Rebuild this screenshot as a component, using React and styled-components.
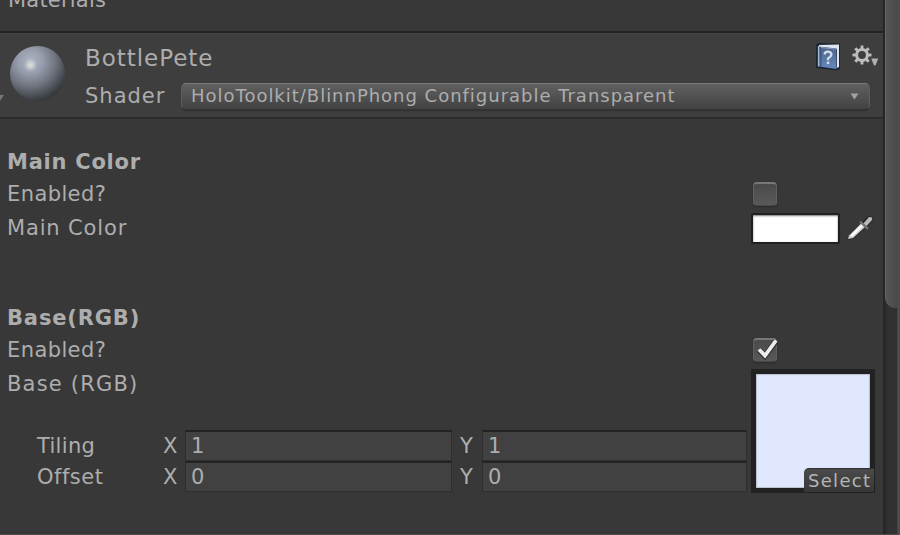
import React from 'react';
import styled, { createGlobalStyle } from 'styled-components';

const Global = createGlobalStyle`
  * { box-sizing: border-box; }
  body { margin: 0; background: #383838; font-family: "DejaVu Sans", sans-serif; color: #adadad; overflow: hidden; }
  svg { display: block; flex: none; }
`;

const Window = styled.div`
  display: flex;
  width: 900px;
  height: 535px;
  overflow: hidden;
  background: #383838;
  border-bottom: 1px solid #4b4b4b;
`;

const Panel = styled.main`
  width: 883px;
  flex: none;
`;

const Text = styled.span`
  display: block;
  white-space: pre;
  font-size: ${(p) => p.$size || 21}px;
  font-weight: ${(p) => (p.$bold ? 700 : 400)};
  letter-spacing: ${(p) => p.$track || 0}px;
  line-height: 30px;
  font-variant-ligatures: none;
`;

const Previous = styled.div`
  height: 33px;
  padding-left: 8px;
  overflow: hidden;
  border-bottom: 2px solid #232323;
  ${Text} { margin-top: -15px; }
`;

const Header = styled.header`
  height: 86px;
  display: flex;
  background: #3e3e3e;
  border-top: 1px solid #444;
  border-bottom: 2px solid #2c2c2c;
`;

const Preview = styled.div`
  width: 85px;
  flex: none;
  display: flex;
  padding-top: 11px;
`;

const Foldout = styled.div`
  width: 9px;
  padding-top: 49px;
`;

const HeaderBody = styled.div`
  flex: 1;
  padding-right: 13px;
`;

const TitleRow = styled.div`
  height: 47px;
  display: flex;
  justify-content: space-between;
  ${Text} { margin-top: 9px; }
`;

const HeaderIcons = styled.div`
  display: flex;
  gap: 10px;
  padding-top: 9px;
  margin-right: -9px;
`;

const ShaderRow = styled.div`
  display: flex;
  align-items: center;
  height: 30px;
`;

const ShaderLabel = styled.div`
  width: 96px;
  flex: none;
`;

const Dropdown = styled.div`
  flex: 1;
  height: 27px;
  display: flex;
  align-items: center;
  justify-content: space-between;
  padding: 0 10px 0 9px;
  border: 1px solid #606060;
  border-top-color: #7b7b7b;
  border-bottom-color: #343434;
  border-radius: 5px;
  background: linear-gradient(#606060, #424242);
  box-shadow: 0 1px 1px #303030;
`;

const Group = styled.section`
  padding: ${(p) => p.$top}px 8px 0 7px;
`;

const Row = styled.div`
  height: ${(p) => p.$height}px;
  display: flex;
  align-items: center;
  justify-content: space-between;
`;

const Control = styled.div`
  width: 124px;
  display: flex;
  align-items: center;
  padding-left: ${(p) => p.$inset || 0}px;
`;

const CheckBox = styled.div`
  width: 24px;
  height: 24px;
  border: 1px solid #626262;
  border-top: 2px solid #777;
  border-bottom-color: #484848;
  border-radius: 4px;
  background: linear-gradient(#4a4a4a, #595959);
  box-shadow: 0 1px 2px #2a2a2a;
  svg { margin: -1px 0 0 2px; overflow: visible; }
`;

const Swatch = styled.div`
  width: 89px;
  height: 31px;
  background: #fff;
  border: 2px solid #202020;
  border-radius: 2px;
  box-shadow: inset 0 1px 2px #777;
  margin-right: 7px;
`;

const TextureRow = styled.div`
  display: flex;
  justify-content: space-between;
  height: 128px;
`;

const TextureInfo = styled.div`
  width: 740px;
  padding-top: 4px;
`;

const Vectors = styled.div`
  margin-top: 31px;
`;

const VectorRow = styled.div`
  height: 31px;
  display: grid;
  grid-template-columns: 30px 126px 22px 267px 8px 22px 265px;
  > ${Text} { line-height: 33px; }
`;

const Field = styled.div`
  height: 31px;
  padding-left: 5px;
  background: #414141;
  border: 1px solid #2e2e2e;
  border-top: 2px solid #232323;
  ${Text} { line-height: 29px; }
`;

const Thumb = styled.div`
  width: 124px;
  height: 124px;
  margin-top: 4px;
  border: 5px solid #222;
  background: #e0e8ff;
  box-shadow: inset 0 0 1px 1px #b9bdc8;
  display: flex;
  align-items: flex-end;
  justify-content: flex-end;
`;

const SelectButton = styled.div`
  flex: none;
  width: 70px;
  height: 24px;
  margin: 0 -4px -4px 0;
  padding-left: 4px;
  background: linear-gradient(#4b4b4b, #373737);
  border-top: 1px solid #303030;
  border-radius: 5px 0 0 0;
  ${Text} { line-height: 24px; color: #b4b4b4; }
`;

const Track = styled.div`
  width: 17px;
  height: 535px;
  background: linear-gradient(90deg, #242424, #2b2b2b 3px, #323232 5px, #313131 14px, #545454 15px, #484848);
  padding-left: 2px;
`;

const Grip = styled.div`
  width: 13px;
  height: 308px;
  border-radius: 0 0 2px 12px;
  border-left: 1px solid #656565;
  background: linear-gradient(90deg, #565656, #494949);
`;

const Sphere = () => (
  <svg width="60" height="60" viewBox="0 0 60 60">
    <defs>
      <radialGradient id="ball" cx="37%" cy="28%" r="75%">
        <stop offset="0" stopColor="#aeb5c6" />
        <stop offset=".3" stopColor="#969dac" />
        <stop offset=".6" stopColor="#70757f" />
        <stop offset=".88" stopColor="#44474d" />
        <stop offset="1" stopColor="#34363a" />
      </radialGradient>
      <radialGradient id="glint">
        <stop offset="0" stopColor="#deddd8" />
        <stop offset=".45" stopColor="#cfd0d0" stopOpacity=".8" />
        <stop offset="1" stopColor="#aab0bf" stopOpacity="0" />
      </radialGradient>
    </defs>
    <circle cx="28.5" cy="28.500" r="27.5" fill="url(#ball)" />
    <circle cx="21.5" cy="20" r="7.500" fill="url(#glint)" />
  </svg>
);

const HelpBook = () => (
  <svg width="26" height="28" viewBox="0 0 26 28">
    <defs>
      <linearGradient id="cover" x2="0" y2="1">
        <stop offset="0" stopColor="#4b6488" />
        <stop offset="1" stopColor="#6688bb" />
      </linearGradient>
    </defs>
    <path d="M0 2 2 0 24 0.5V26l-3 1.500L0 25Z" fill="#1d2635" />
    <path d="M3 2 23 1.500V24l-2 1V6L3 4Z" fill="#dfe5ec" />
    <path d="M3 3.500 20.500 5.500V26L3 23.500Z" fill="url(#cover)" />
    <path d="M2.500 3v20.500" stroke="#a2b7d0" strokeWidth="1.300" />
    <path d="M4.800 4v20" stroke="#3a5379" strokeWidth="1.200" />
    <path d="M5 4.500 20 6.200" stroke="#879bb8" strokeWidth="1" />
    <path d="M8.500 11.500Q9 8.500 12 8.700q3.500.3 3.400 3Q15 13.700 12 15.500v1.800" fill="none" stroke="#cfdcee" strokeWidth="2.300" />
    <rect x="10.800" y="18.600" width="2.500" height="2.500" fill="#cfdcee" />
  </svg>
);

const teeth = [0, 45, 90, 135, 180, 225, 270, 315];
const Gear = () => (
  <svg width="27" height="28" viewBox="0 0 27 28">
    <g fill="none" stroke="#bdbdbd">
      <circle cx="10" cy="12" r="5.400" strokeWidth="3" />
      {teeth.map((a) => (
        <path key={a} d="M10 2.500v4" strokeWidth="2.900" transform={`rotate(${a} 10 12)`} />
      ))}
    </g>
    <path d="M19.200 15.500h7L23.500 22.500h-1.500Z" fill="#b0b0b0" />
  </svg>
);

const Arrow = () => (
  <svg width="9" height="8" viewBox="0 0 9 8">
    <path d="M.5 1.500h8L4.500 7.500Z" fill="#a2a2a2" />
  </svg>
);

const FoldArrow = () => (
  <svg width="5" height="9" viewBox="0 0 5 9">
    <path d="M0 1h4L0 7Z" fill="#777" />
  </svg>
);

const Check = () => (
  <svg width="22" height="22" viewBox="0 0 22 22">
    <path d="M3 11 9 17 20 2" fill="none" stroke="#303030" strokeWidth="5.500" />
    <path d="M3 10.500 9 16.500 20 1.500" fill="none" stroke="#ececec" strokeWidth="3.800" />
  </svg>
);

const Dropper = () => (
  <svg width="28" height="28" viewBox="0 0 28 28">
    <path d="M1 25.500 4 19.500 15 9 19 5q3-3.500 5-1.500t-1 5l-4 4L7 23.500Z" fill="#292929" stroke="#292929" strokeWidth="1.500" />
    <path d="M1 25 2 21.500 14 9.500l3.800 3.800L6 24Z" fill="#d0d0d0" />
    <path d="M4.500 22 15 11.500" stroke="#fff" strokeWidth="2.400" />
    <path d="m13 7.500 8 7.500" stroke="#777" strokeWidth="2" />
    <path d="m16.500 9.500 5.500-6.500 3 .5v2.500l-5.500 6Z" fill="#b8b8b8" />
  </svg>
);

const vectors = [
  { name: 'Tiling', value: '1', track: 0.3 },
  { name: 'Offset', value: '0', track: 0.5 },
];

export default function App() {
  return (
    <>
      <Global />
      <Window>
        <Panel>
          <Previous><Text $track={0.2}>Materials</Text></Previous>
          <Header>
            <Preview>
              <Foldout><FoldArrow /></Foldout>
              <Sphere />
            </Preview>
            <HeaderBody>
              <TitleRow>
                <Text $size={23} $track={0.95}>BottlePete</Text>
                <HeaderIcons><HelpBook /><Gear /></HeaderIcons>
              </TitleRow>
              <ShaderRow>
                <ShaderLabel><Text $track={1}>Shader</Text></ShaderLabel>
                <Dropdown>
                  <Text $size={18} $track={0.98}>HoloToolkit/BlinnPhong Configurable Transparent</Text>
                  <Arrow />
                </Dropdown>
              </ShaderRow>
            </HeaderBody>
          </Header>
          <Group $top={27}>
            <Row $height={32}><Text $bold $track={0.75}>Main Color</Text></Row>
            <Row $height={31}>
              <Text $track={0.4}>Enabled?</Text>
              <Control $inset={2}><CheckBox /></Control>
            </Row>
            <Row $height={38}>
              <Text $track={0.85}>Main Color</Text>
              <Control><Swatch /><Dropper /></Control>
            </Row>
          </Group>
          <Group $top={55}>
            <Row $height={32}><Text $bold $track={0.85}>Base(RGB)</Text></Row>
            <Row $height={31}>
              <Text $track={0.4}>Enabled?</Text>
              <Control $inset={2}><CheckBox><Check /></CheckBox></Control>
            </Row>
            <TextureRow>
              <TextureInfo>
                <Text $track={1.2}>Base (RGB)</Text>
                <Vectors>
                  {vectors.map((v) => (
                    <VectorRow key={v.name}>
                      <span />
                      <Text $track={v.track}>{v.name}</Text>
                      <Text>X</Text>
                      <Field><Text>{v.value}</Text></Field>
                      <span />
                      <Text>Y</Text>
                      <Field><Text>{v.value}</Text></Field>
                    </VectorRow>
                  ))}
                </Vectors>
              </TextureInfo>
              <Thumb><SelectButton><Text $size={18} $track={1.3}>Select</Text></SelectButton></Thumb>
            </TextureRow>
          </Group>
        </Panel>
        <Track><Grip /></Track>
      </Window>
    </>
  );
}
